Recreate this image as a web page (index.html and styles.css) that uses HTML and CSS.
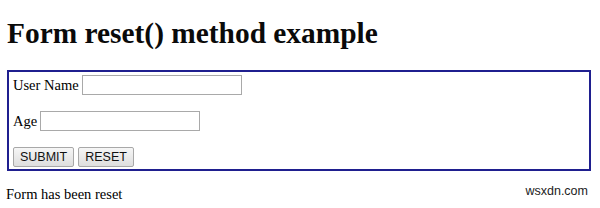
FILE: index.html
```html
<!DOCTYPE html>
<html lang="en">
<head>
    <meta charset="UTF-8">
    <meta name="viewport" content="width=device-width, initial-scale=1.0">
    <title>Form reset() method example</title>

    <link rel="stylesheet" href="styles.css">
</head>
<body>

    <h1 class="title">Form reset() method example</h1>

    <form class="user-form" onsubmit="return false">
        <div class="row">
            <label for="uname">User Name</label>
            <input type="text" id="uname" class="field">
        </div>
        <div class="row">
            <label for="age">Age</label>
            <input type="text" id="age" class="field">
        </div>
        <div class="row buttons">
            <button type="submit" class="btn">SUBMIT</button>
            <button type="reset" class="btn">RESET</button>
        </div>
    </form>

    <p class="result">Form has been reset</p>

    <div class="mark">wsxdn.com</div>

</body>
</html>
```

FILE: styles.css
```css
/* page */
body {
    margin: 0;
    padding: 0 9px 0 7px;
    font-family: "Liberation Serif", "Times New Roman", serif;
    font-size: 14.5px;
    color: #000;
    background: #fff;
    position: relative;
    height: 208px;
    box-sizing: border-box;
}

.title {
    font-size: 29.4px;
    font-weight: bold;
    line-height: 33px;
    margin: 17px 0 20px 0;
    color: #0a0a0a;
}

.user-form {
    border: 2px solid #1f1f8f;
    padding: 3px 4px 2px 4px;
    display: flex;
    flex-direction: column;
    gap: 16px;
}

.row {
    display: flex;
    align-items: center;
    gap: 3px;
    height: 20px;
}

.row label {
    line-height: 20px;
}

.field {
    width: 160px;
    height: 20px;
    box-sizing: border-box;
    border: 1px solid #a9a9a9;
    padding: 1px 2px;
    margin: 0;
    font-size: 13px;
    background: #fff;
}

.buttons {
    gap: 4px;
}

.btn {
    height: 20px;
    box-sizing: border-box;
    margin: 0;
    padding: 0 6px;
    font-family: "Liberation Sans", Arial, sans-serif;
    font-size: 12.5px;
    color: #111;
    border: 1px solid #a8a8a8;
    border-radius: 2px;
    background: linear-gradient(#f6f6f6, #dedede);
}

.result {
    margin: 15px 0 0 -1px;
    line-height: 17px;
}

.mark {
    position: absolute;
    right: 12px;
    top: 184px;
    font-family: "Liberation Sans", Arial, sans-serif;
    font-size: 12.5px;
    color: #222;
}
```
